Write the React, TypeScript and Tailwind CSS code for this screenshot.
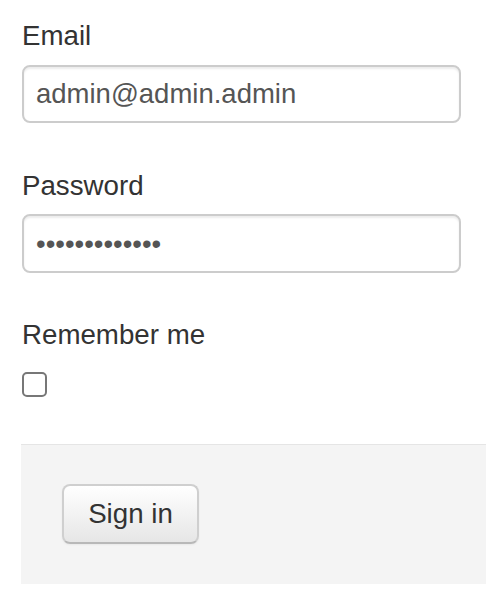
import React from "react";

export default function App() {
  const font = { fontFamily: '"Liberation Sans", Arial, Helvetica, sans-serif' };
  return (
    <div className="w-[486px] h-[592px] bg-white overflow-hidden" style={font}>
      <form className="pt-[16px] pl-[21px]" onSubmit={(e) => e.preventDefault()}>
        <div className="pl-[1px]">
          <label className="block text-[27.7px] leading-[40px] text-[#333] mb-[9px]">Email</label>
          <input
            type="text"
            defaultValue="admin@admin.admin"
            className="block w-[439px] h-[58px] rounded-[8px] border-2 border-[#cccccc] bg-white px-[12px] text-[27.5px] text-[#555] shadow-[inset_0_2px_2px_rgba(0,0,0,0.075)] outline-none"
            style={font}
          />
          <label className="block text-[27.7px] leading-[40px] text-[#333] mt-[43px] mb-[8px]">Password</label>
          <input
            type="password"
            defaultValue="aaaaaaaaaaaaa"
            className="block w-[439px] h-[59px] rounded-[8px] border-2 border-[#cccccc] bg-white px-[12px] text-[27.5px] text-[#555] shadow-[inset_0_2px_2px_rgba(0,0,0,0.075)] outline-none"
            style={font}
          />
          <label className="block text-[27.7px] leading-[40px] text-[#333] mt-[42px] mb-[17px]">Remember me</label>
          <div className="w-[25px] h-[25px] rounded-[5px] border-2 border-[#777] bg-white" />
        </div>
        <div className="mt-[47px] border-t border-[#e5e5e5] bg-[#f4f4f4] h-[140px] pt-[39px] pl-[41px]">
          <button
            type="submit"
            className="w-[137px] h-[60px] rounded-[8px] border-2 border-[#cfcfcf] border-b-[#b8b8b8] bg-gradient-to-b from-white to-[#e6e6e6] text-[27.7px] text-[#333] shadow-[inset_0_1px_0_rgba(255,255,255,0.2),0_1px_2px_rgba(0,0,0,0.05)]"
            style={font}
          >
            Sign in
          </button>
        </div>
      </form>
    </div>
  );
}
